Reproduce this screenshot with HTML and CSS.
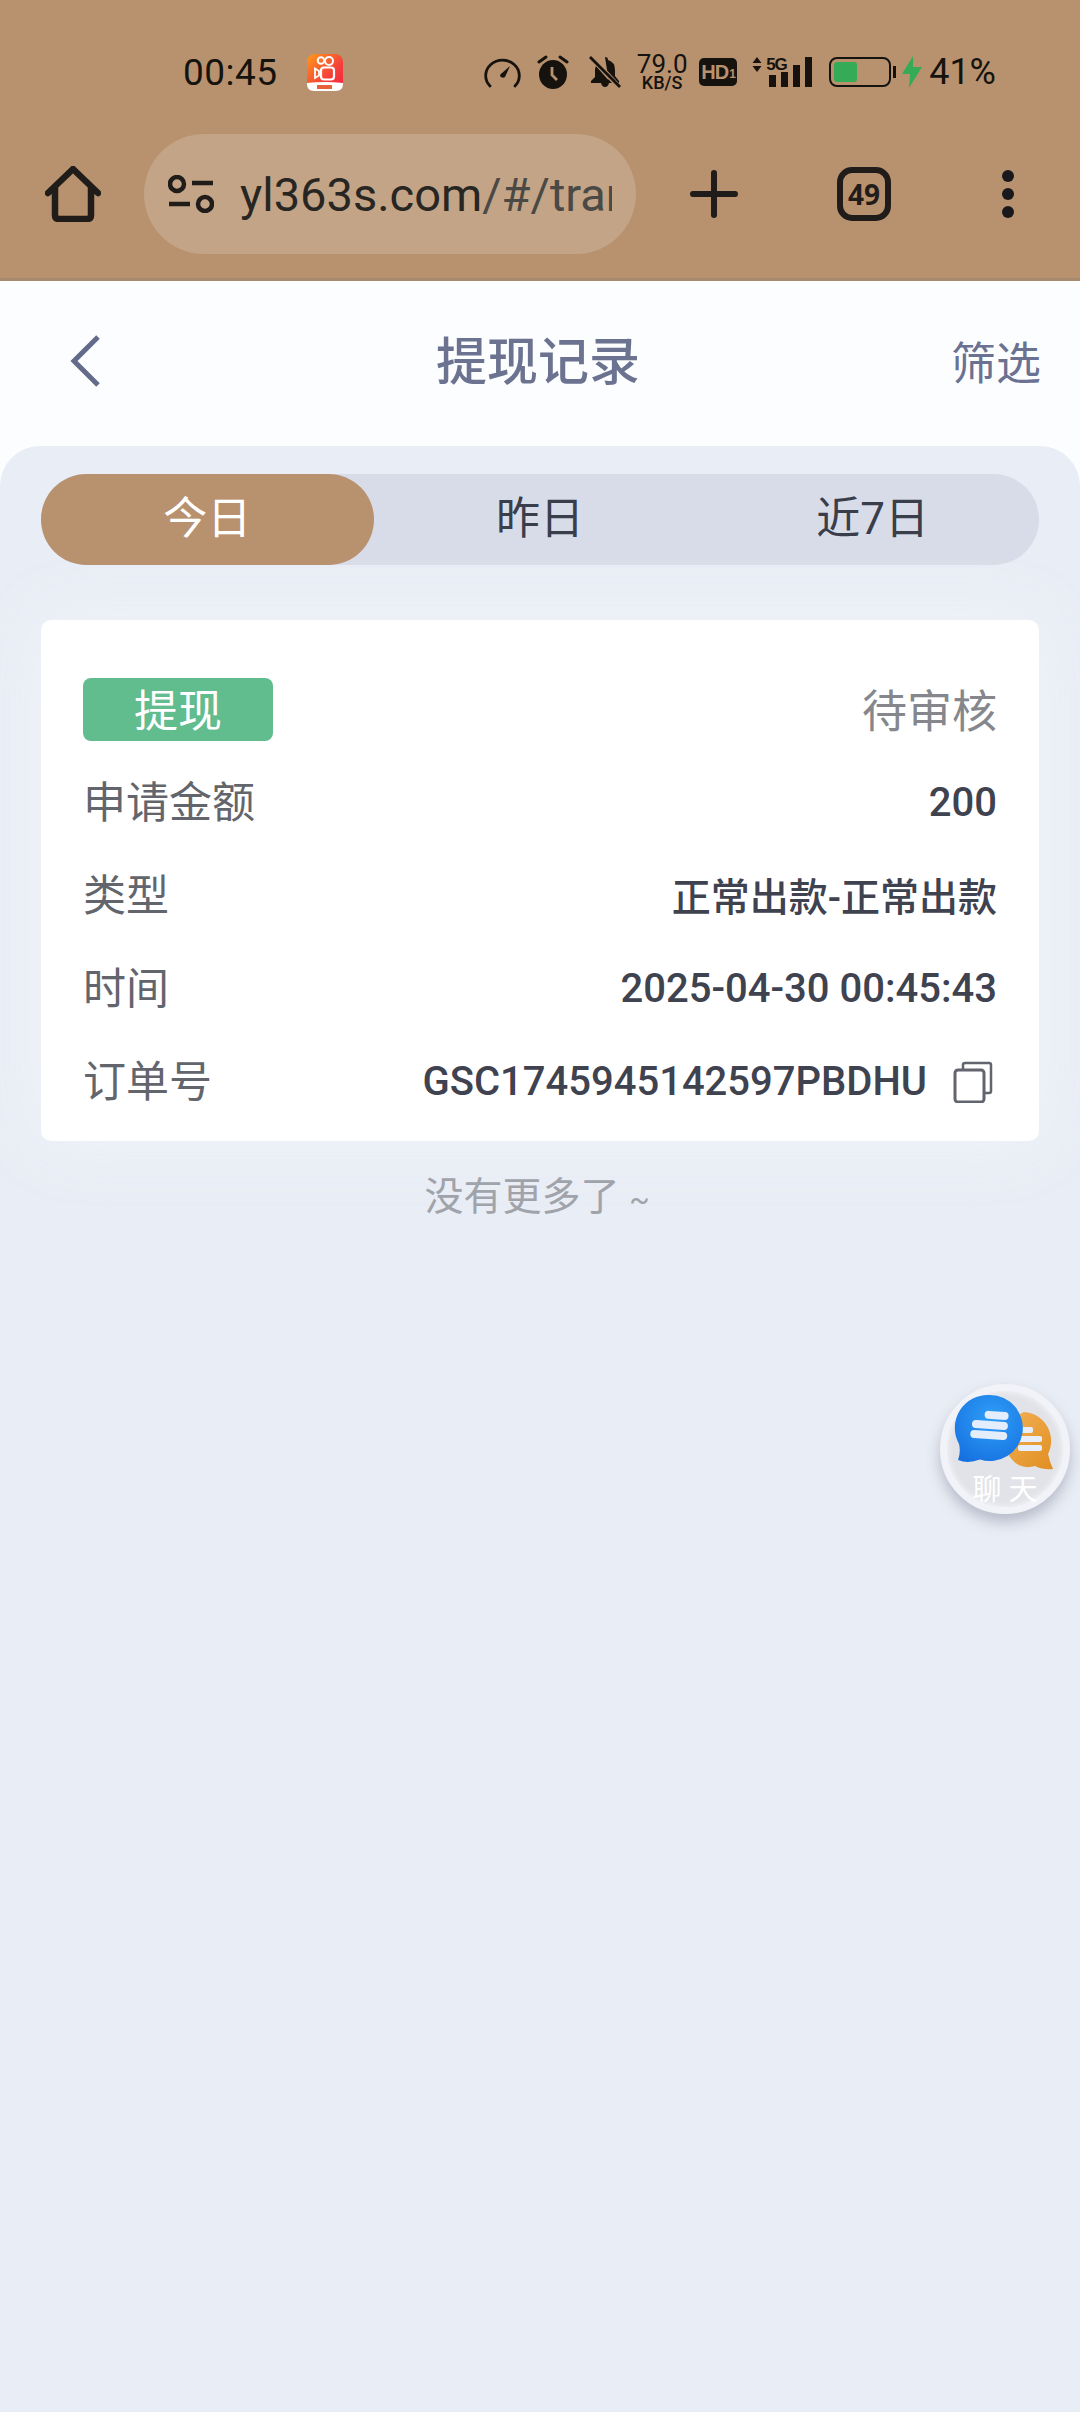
FILE: index.html
```html
<!DOCTYPE html>
<html lang="zh-CN">
<head>
    <meta charset="UTF-8">
    <meta name="viewport" content="width=device-width, initial-scale=1.0">
    <title>提现记录</title>
    <link rel="stylesheet" href="styles.css">
</head>
<body>

<div class="browser-top">
    <div class="statusbar">
        <span class="clock">00:45</span>
        <svg class="app-icon" viewBox="0 0 36 37" width="36" height="37">
            <defs>
                <linearGradient id="ks" x1="0" y1="0" x2="1" y2="1">
                    <stop offset="0" stop-color="#ff9a1a"/>
                    <stop offset="0.6" stop-color="#f5403a"/>
                    <stop offset="1" stop-color="#f5203f"/>
                </linearGradient>
            </defs>
            <rect width="36" height="37" rx="8" fill="url(#ks)"/>
            <path d="M0 29Q18 27 36 29V30Q36 37 29 37H7Q0 37 0 30Z" fill="#fff"/>
            <rect x="10" y="31" width="15" height="4" fill="#e8603a"/>
            <circle cx="14" cy="6.500" r="3.300" fill="none" stroke="#fff" stroke-width="2"/>
            <circle cx="22" cy="7" r="4" fill="none" stroke="#fff" stroke-width="2"/>
            <rect x="14" y="13.500" width="13" height="12" rx="3" fill="none" stroke="#fff" stroke-width="2.200"/>
            <path d="M12 17L8 14.500V24L12 21.500Z" fill="none" stroke="#fff" stroke-width="1.800"/>
        </svg>
        <div class="status-right">
            <svg class="ic-gauge" viewBox="0 0 37 31" width="37" height="31">
                <path d="M6 29A16.800 15.500 0 1 1 31 29" fill="none" stroke="#16130f" stroke-width="2.800" stroke-linecap="round"/>
                <path d="M26 9L21 20Q18 22 16 19Q16 17 18 16Z" fill="#16130f"/>
            </svg>
            <svg class="ic-alarm" viewBox="0 0 32 34" width="32" height="34">
                <ellipse cx="16" cy="19.500" rx="14" ry="14.500" fill="#16130f"/>
                <path d="M2 7L9 2M30 7L23 2" stroke="#16130f" stroke-width="3" stroke-linecap="round"/>
                <path d="M15 12V20L20 25" fill="none" stroke="#b8916e" stroke-width="2.800"/>
            </svg>
            <svg class="ic-bell" viewBox="0 0 32 32" width="32" height="32">
                <path d="M16 1Q19 1 19 4Q26 6 26 14V20L30 25V27H2V25L6 21V14Q6 12 7 10L22 27H12Q13 31 16 31Q19 31 20 27" fill="#16130f"/>
                <path d="M3 2L31 32" stroke="#b8916e" stroke-width="5"/>
                <path d="M1 1L31 31" stroke="#16130f" stroke-width="2.800"/>
            </svg>
            <div class="speed"><span class="speed-num">79.0</span><span class="speed-unit">KB/S</span></div>
            <span class="hd">HD<small>1</small></span>
            <div class="signal">
                <svg viewBox="0 0 10 15" width="10" height="15"><path d="M5 0L9.500 6H.5ZM5 15L.5 9H9.500Z" fill="#16130f"/></svg>
                <span class="five-g">5G</span>
                <div class="bars">
                    <i class="bar bar-1"></i><i class="bar bar-2"></i><i class="bar bar-3"></i><i class="bar bar-4"></i>
                </div>
            </div>
            <div class="battery"><div class="battery-fill"></div></div>
            <svg class="ic-bolt" viewBox="0 0 20 32" width="20" height="32"><path d="M11 0L0 18H8L7 32L20 11H11Z" fill="#35ab57"/></svg>
            <span class="percent">41%</span>
        </div>
    </div>
    <div class="toolbar">
        <svg class="ic-home" viewBox="0 0 56 56" width="56" height="56">
            <path d="M3 27L28 3L53 27M10 21V49Q10 53 14 53H42Q46 53 46 49V21" fill="none" stroke="#1f1c19" stroke-width="6.500" stroke-linecap="round" stroke-linejoin="round"/>
        </svg>
        <div class="url-pill">
            <svg class="ic-tune" viewBox="0 0 46 38" width="46" height="38">
                <circle cx="9" cy="9" r="7" fill="none" stroke="#1f1c19" stroke-width="4.500"/>
                <path d="M24 8H45M1 29H22" stroke="#1f1c19" stroke-width="4.500"/>
                <circle cx="37" cy="29" r="7" fill="none" stroke="#1f1c19" stroke-width="4.500"/>
            </svg>
            <div class="url-text">yl363s.com<span class="url-path">/#/transaction</span></div>
        </div>
        <svg class="ic-plus" viewBox="0 0 48 48" width="48" height="48">
            <path d="M24 3V45M3 24H45" stroke="#1f1c19" stroke-width="6" stroke-linecap="round"/>
        </svg>
        <div class="tab-count">49</div>
        <div class="more">
            <i class="more-dot"></i><i class="more-dot"></i><i class="more-dot"></i>
        </div>
    </div>
</div>

<div class="page">
    <div class="page-head">
        <svg class="ic-back" viewBox="0 0 32 54" width="32" height="54">
            <path d="M29 3L5 27L29 51" fill="none" stroke="#646b8a" stroke-width="5"/>
        </svg>
        <h1 class="page-title">提现记录</h1>
        <span class="filter">筛选</span>
    </div>

    <div class="panel">
        <div class="tabs">
            <div class="tab tab-active">今日</div>
            <div class="tab">昨日</div>
            <div class="tab">近7日</div>
        </div>

        <div class="card">
            <div class="row">
                <span class="tag">提现</span>
                <span class="state">待审核</span>
            </div>
            <div class="row">
                <span class="label">申请金额</span>
                <span class="value">200</span>
            </div>
            <div class="row">
                <span class="label">类型</span>
                <span class="value value-cjk">正常出款-正常出款</span>
            </div>
            <div class="row">
                <span class="label">时间</span>
                <span class="value">2025-04-30 00:45:43</span>
            </div>
            <div class="row">
                <span class="label">订单号</span>
                <span class="value value-order">GSC1745945142597PBDHU
                    <svg class="ic-copy" viewBox="0 0 40 42" width="40" height="42">
                        <path d="M10 8V4Q10 2 12 2H36Q38 2 38 4V30Q38 32 36 32H31" fill="none" stroke="#62656e" stroke-width="2.500"/>
                        <rect x="2" y="9" width="29" height="32" rx="3" fill="none" stroke="#62656e" stroke-width="3"/>
                    </svg>
                </span>
            </div>
        </div>

        <p class="no-more">没有更多了 <span class="tilde">~</span></p>
    </div>
</div>

<div class="chat-float">
    <svg class="chat-art" viewBox="0 0 130 130" width="130" height="130">
        <defs>
            <radialGradient id="bubbleBlue" cx="0.55" cy="0.35" r="0.75">
                <stop offset="0" stop-color="#2f9ff8"/>
                <stop offset="1" stop-color="#1670e0"/>
            </radialGradient>
            <linearGradient id="bubbleOrange" x1="0" y1="0" x2="1" y2="1">
                <stop offset="0" stop-color="#f4b257"/>
                <stop offset="1" stop-color="#e08f22"/>
            </linearGradient>
        </defs>
        <path d="M84 28A29 29 0 0 1 108 70Q110 79 113 85Q103 86 95 82Q78 87 68 70L60 40Z" fill="url(#bubbleOrange)"/>
        <rect x="78" y="43" width="15" height="6" rx="2" fill="#e6eefb"/>
        <rect x="78" y="52" width="24" height="6" rx="2" fill="#e6eefb"/>
        <rect x="78" y="61" width="24" height="6" rx="2" fill="#e6eefb"/>
        <path d="M50 11A33 33 0 1 1 40 75.500Q28 80 18 76Q21 68 19 60A33 33 0 0 1 50 11Z" fill="url(#bubbleBlue)"/>
        <g transform="rotate(4 50 40)">
            <rect x="44" y="27" width="24" height="8" rx="4" fill="#e4edfc"/>
            <rect x="32" y="37" width="36" height="8" rx="4" fill="#e4edfc"/>
            <rect x="31" y="47" width="37" height="8" rx="4" fill="#e4edfc"/>
        </g>
    </svg>
    <span class="chat-label">聊 天</span>
</div>

</body>
</html>
```

FILE: styles.css
```css
* {
    box-sizing: border-box;
}
html, body {
    margin: 0;
    padding: 0;
}
body {
    position: relative;
    width: 1080px;
    height: 2412px;
    overflow: hidden;
    background-color: #e9edf5;
    font-family: Roboto, "Noto Sans CJK SC", sans-serif;
}

/* browser chrome */
.browser-top {
    background-color: #b8916e;
    border-bottom: 3px solid #a88b6e;
}
.statusbar {
    display: flex;
    align-items: center;
    height: 134px;
    padding: 10px 84px 0 183px;
    color: #16130f;
}
.clock {
    font-size: 37px;
    letter-spacing: 0.5px;
}
.app-icon {
    margin-left: 29px;
}
.status-right {
    display: flex;
    align-items: center;
    margin-left: auto;
}
.ic-alarm {
    margin-left: 16px;
}
.ic-bell {
    margin-left: 20px;
}
.speed {
    display: flex;
    flex-direction: column;
    align-items: center;
    margin-left: 16px;
    width: 50px;
    line-height: 1;
}
.speed-num {
    font-size: 26px;
    height: 22px;
    line-height: 22px;
}
.speed-unit {
    font-size: 18px;
    font-weight: 500;
    height: 16px;
    line-height: 16px;
}
.hd {
    display: flex;
    align-items: center;
    justify-content: center;
    margin-left: 12px;
    width: 38px;
    height: 28px;
    border-radius: 5px;
    background-color: #16130f;
    color: #b8916e;
    font-family: "Liberation Sans", sans-serif;
    font-size: 20px;
    font-weight: 700;
    letter-spacing: -1px;
}
.hd small {
    font-size: 12px;
    margin-left: 1px;
    padding-top: 4px;
}
.signal {
    display: flex;
    align-items: flex-start;
    position: relative;
    margin-left: 15px;
    width: 60px;
    height: 30px;
}
.five-g {
    margin-left: 4px;
    font-family: "Liberation Sans", sans-serif;
    font-size: 17px;
    line-height: 15px;
    font-weight: 700;
    letter-spacing: -1px;
}
.bars {
    position: absolute;
    right: 0;
    bottom: 0;
    display: flex;
    align-items: flex-end;
    gap: 5px;
}
.bar {
    display: block;
    width: 7px;
    background-color: #16130f;
}
.bar-1 { height: 12px; }
.bar-2 { height: 15px; }
.bar-3 { height: 22px; }
.bar-4 { height: 30px; }
.battery {
    position: relative;
    margin-left: 17px;
    width: 62px;
    height: 30px;
    padding: 3px;
    border: 2px solid #16130f;
    border-radius: 8px;
}
.battery::after {
    content: "";
    position: absolute;
    right: -7px;
    top: 7px;
    width: 3px;
    height: 12px;
    background-color: #16130f;
}
.battery-fill {
    width: 23px;
    height: 100%;
    border-radius: 3px;
    background-color: #35ab57;
}
.ic-bolt {
    margin-left: 11px;
}
.percent {
    margin-left: 7px;
    font-size: 36px;
}
.toolbar {
    display: flex;
    align-items: center;
    height: 144px;
    padding: 0 0 24px 45px;
}
.url-pill {
    display: flex;
    align-items: center;
    margin-left: 43px;
    width: 492px;
    height: 120px;
    padding-left: 24px;
    padding-right: 24px;
    border-radius: 60px;
    background-color: #c3a486;
}
.ic-tune {
    flex: none;
}
.url-text {
    flex: 1;
    margin-left: 26px;
    overflow: hidden;
    white-space: nowrap;
    font-family: Roboto, sans-serif;
    font-size: 47px;
    color: #282622;
}
.url-path {
    color: #4a4945;
}
.ic-plus {
    margin-left: 54px;
}
.tab-count {
    display: flex;
    align-items: center;
    justify-content: center;
    margin-left: 99px;
    width: 54px;
    height: 54px;
    border: 6px solid #1f1c19;
    border-radius: 15px;
    color: #1f1c19;
    font-family: "Open Sans", sans-serif;
    font-size: 28px;
    font-weight: 700;
}
.more {
    display: flex;
    flex-direction: column;
    gap: 6px;
    margin-left: 111px;
}
.more-dot {
    display: block;
    width: 12px;
    height: 12px;
    border-radius: 50%;
    background-color: #19191d;
}

/* page header */
.page {
    background-color: #fcfdff;
}
.page-head {
    display: flex;
    align-items: center;
    justify-content: space-between;
    height: 165px;
    padding: 0 39px 6px 69px;
}
.page-title {
    margin: 0 0 6px 24px;
    font-size: 51px;
    font-weight: 500;
    color: #6c7390;
}
.filter {
    font-size: 45px;
    color: #6b7190;
}

/* content */
.panel {
    height: 1966px;
    padding: 28px 41px 0;
    border-radius: 40px 40px 0 0;
    background-color: #e9edf5;
}
.tabs {
    display: flex;
    height: 91px;
    border-radius: 46px;
    background-color: #d8dce8;
}
.tab {
    flex: 1;
    display: flex;
    align-items: center;
    justify-content: center;
    padding-bottom: 10px;
    border-radius: 46px;
    font-size: 44px;
    color: #3a3d4a;
}
.tab-active {
    background-color: #b8916e;
    color: #fff;
}
.card {
    margin-top: 55px;
    padding: 43px 42px 13px;
    border-radius: 10px;
    background-color: #fff;
    box-shadow: 0 0 70px rgba(243, 245, 251, 0.9);
}
.row {
    display: flex;
    align-items: center;
    justify-content: space-between;
    height: 93px;
}
.tag {
    display: flex;
    align-items: center;
    justify-content: center;
    width: 190px;
    height: 63px;
    padding-bottom: 4px;
    border-radius: 8px;
    background-color: #61bc8e;
    color: #fff;
    font-size: 44px;
}
.state {
    padding-bottom: 3px;
    font-size: 45px;
    color: #85878c;
}
.label {
    padding-bottom: 7px;
    font-size: 43px;
    color: #63656c;
}
.value {
    font-size: 40px;
    font-weight: 500;
    color: #3f424f;
}
.value-cjk {
    font-size: 39px;
    padding-bottom: 4px;
}
.value-order {
    display: flex;
    align-items: center;
    gap: 26px;
    padding-right: 4px;
}
.ic-copy {
    display: block;
}
.no-more {
    margin: 24px 6px 0 0;
    text-align: center;
    font-size: 39px;
    color: #a0a3aa;
}
.tilde {
    font-size: 30px;
}

/* floating chat button */
.chat-float {
    position: absolute;
    left: 940px;
    top: 1384px;
    width: 130px;
    height: 130px;
    border-radius: 50%;
    background-color: #e1e3e8;
    border: 7px solid #f2f3f8;
    box-shadow: 0 8px 14px rgba(90, 95, 120, 0.35), inset 0 0 6px rgba(255, 255, 255, 0.8);
}
.chat-art {
    position: absolute;
    left: -7px;
    top: -7px;
}
.chat-label {
    position: absolute;
    left: 0;
    right: 0;
    top: 83px;
    text-align: center;
    font-size: 29px;
    line-height: 32px;
    color: #fff;
}
```
